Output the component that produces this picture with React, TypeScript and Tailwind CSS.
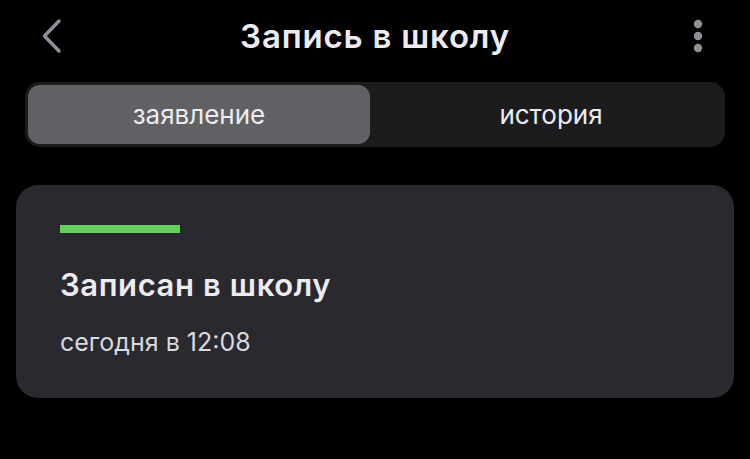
import { useState } from 'react';

const tabs = ['заявление', 'история'];

function BackIcon() {
  return (
    <svg width="24" height="36" viewBox="0 0 24 36" fill="none">
      <path d="M19 3 L4.5 18 L19 33" stroke="#8e9099" strokeWidth="3.5" strokeLinecap="round" strokeLinejoin="round" />
    </svg>
  );
}

function MoreIcon() {
  return (
    <svg width="10" height="34" viewBox="0 0 10 34" fill="#8e9099">
      <circle cx="5" cy="5" r="4.2" />
      <circle cx="5" cy="17" r="4.2" />
      <circle cx="5" cy="29" r="4.2" />
    </svg>
  );
}

export default function App() {
  const [active, setActive] = useState(0);

  return (
    <div className="min-h-[459px] w-full bg-black text-[#ececf0]" style={{ fontFamily: 'Inter, "Noto Sans", sans-serif' }}>
      <header className="relative flex h-[75px] items-center justify-center">
        <button className="absolute left-[40px] top-[18px]">
          <BackIcon />
        </button>
        <h1 className="pb-[2px] text-[33px] font-semibold tracking-[0.8px]">Запись в школу</h1>
        <button className="absolute left-[693px] top-[19px]">
          <MoreIcon />
        </button>
      </header>

      <div className="mx-[25px] mt-[7px] grid h-[65px] grid-cols-[342px_1fr] rounded-[15px] bg-[#1c1c1f] p-[3px]">
        {tabs.map((t, i) => (
          <button
            key={t}
            onClick={() => setActive(i)}
            className={`rounded-[12px] pb-[1px] text-[26px] ${i === 1 ? 'pl-[10px]' : ''} ${active === i ? 'bg-[#606065] text-[#ececf0]' : 'text-[#ececf0]'}`}
          >
            {t}
          </button>
        ))}
      </div>

      <div className="mx-[16px] mt-[38px] h-[213px] rounded-[22px] bg-[#29292f] px-[44px] pt-[40px]">
        <div className="h-[8px] w-[120px] bg-[#66d15f]" />
        <div className="mt-[34px] text-[31px] font-semibold leading-[36px] tracking-[0.6px]">Записан в школу</div>
        <div className="mt-[24px] text-[25px] leading-[30px] text-[#d9d9de]">сегодня в 12:08</div>
      </div>
    </div>
  );
}
